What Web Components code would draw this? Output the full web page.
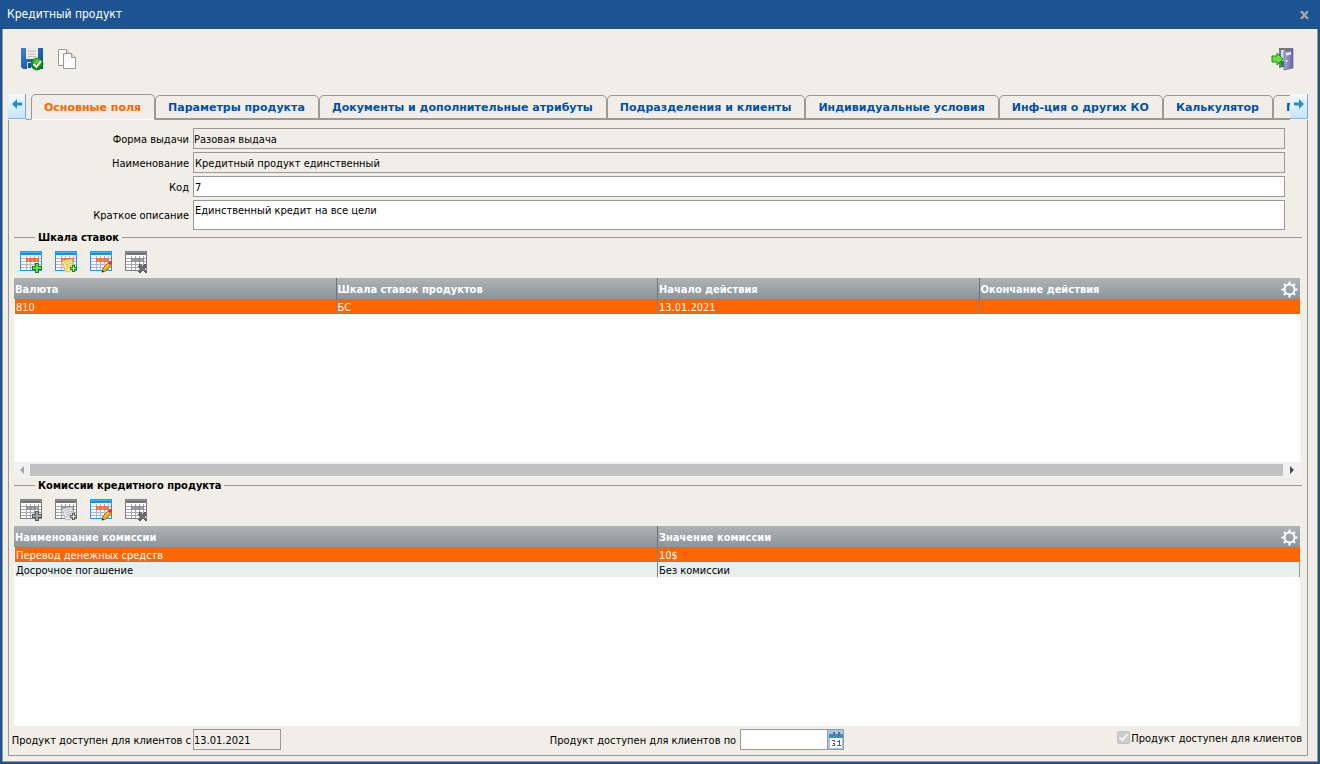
<!DOCTYPE html>
<html lang="ru">
<head>
<meta charset="utf-8">
<title>Кредитный продукт</title>
<style>
html, body { height: 100%; }
body {
  margin: 0;
  background: #1e5391;
  color: #000;
  font: 11px/15px "DejaVu Sans Condensed", "DejaVu Sans", "Liberation Sans", sans-serif;
  --line: #999;
  --paper: #f1eee7;
  --accent: #ff6600;
}
</style>
</head>
<body>
<product-window></product-window>
<script>
const define = (name, html, setup) => {
  const tpl = document.createElement('template');
  tpl.innerHTML = html;
  customElements.define(name, class extends HTMLElement {
    connectedCallback() {
      if (this.shadowRoot) return;
      const root = this.attachShadow({ mode: 'open' });
      root.append(tpl.content.cloneNode(true));
      if (setup) setup(this, root);
    }
  });
};

/* Grid toolbar buttons: a small table sheet with an action mark */
const marks = {
  add: '<path d="M15 12h4v3h3v4h-3v3h-4v-3h-3v-4h3z" fill="var(--m1)"/><path d="M16 13h2v3h3v2h-3v3h-2v-3h-3v-2h3z" fill="var(--m2)"/>',
  copy: '<path d="M7 10l10-2 2 11-8 2c-2-3-2-7-4-11z" fill="var(--n1)" stroke="var(--n2)" shape-rendering="auto"/><path d="M9 12l7-2M10 14l7-2M11 16l6-2M11 18l5-2" stroke="var(--n2)" fill="none" shape-rendering="auto"/><path d="M17 14h3v2h2v3h-2v2h-3v-2h-2v-3h2z" fill="var(--m1)"/><path d="M18 15h1v2h2v1h-2v2h-1v-2h-2v-1h2z" fill="var(--m3)"/>',
  edit: '<g shape-rendering="auto"><path d="M12 21l1-4 6-6 3 3-6 6z" fill="#ffa01e" stroke="#b56000" stroke-width=".8"/><path d="M14 18l5-5" stroke="#ffd45c"/><path d="M18 12l2-2c1-.5 3 1 2 2l-2 2z" fill="#e82f1c"/><path d="M11.600 21.500l1-2.500 1.500 1.700z" fill="#222"/></g>',
  remove: '<path d="M14 13h2v1h1v1h1v-1h1v-1h2v2h1v1h-1v1h-1v2h1v1h1v2h-2v-1h-1v-1h-2v1h-1v1h-2v-1h-1v-1h1v-1h1v-2h-1v-1h-1v-1h1z" fill="#5c5e60"/><path d="M15 15l5 5M20 15l-5 5" stroke="#808488" shape-rendering="auto"/>'
};
define('grid-tool', `
<style>
:host { display: block; width: 22px; height: 22px;
  --f:#1c97ff; --h:#52b4ff; --t:#2a7ccc; --c:#ff6a3c; --d:#ffa283; --g:#b9b5cf; --m1:#118a11; --m2:#6ede3f; --m3:#b8f79a; --n1:#fff3a0; --n2:#d9bb4a; }
:host([disabled]) { --f:#7e8082; --h:#96989a; --t:#5c5e60; --c:#8e9092; --d:#acaeb0; --g:#a6a8aa; --m1:#57595b; --m2:#a2a4a6; --m3:#eee; --n1:#eee; --n2:#b4b4b4; }
button { display: block; width: 22px; height: 22px; padding: 0; border: 0; background: none; }
svg { display: block; overflow: visible; }
</style>
<button type="button"><svg width="22" height="22" viewBox="0 0 22 22" shape-rendering="crispEdges">
<rect width="22" height="20" y="0" rx="1" fill="var(--f)"/>
<rect x="1" y="1" width="20" height="1" fill="var(--h)"/><rect x="2" y="2" width="18" height="1" fill="var(--t)"/>
<rect x="1" y="4" width="20" height="15" fill="#f8f8fd"/>
<path d="M1 7.500h20M1 10.500h20M1 13.500h20M1 16.500h20" stroke="var(--g)"/>
<path d="M6.500 5v14M10.500 5v14M14.500 5v14M18.500 5v14" stroke="var(--g)"/>
<rect x="6" y="7" width="13" height="4" fill="var(--c)"/>
<path d="M8.500 8v3M12.500 8v3M16.500 8v3" stroke="var(--d)"/>
<g id="mark"></g></svg></button>`, (el, root) => {
  root.getElementById('mark').innerHTML = marks[el.getAttribute('kind')];
  const b = root.querySelector('button');
  b.disabled = el.hasAttribute('disabled');
  b.setAttribute('aria-label', el.getAttribute('label'));
});

define('tool-row', `
<style>:host { display: flex; gap: 13px; padding: 6px 6px 5px; }</style><slot></slot>`);

define('section-title', `
<style>
:host { display: flex; align-items: center; gap: 3px; height: 15px; font-weight: bold; }
i { height: 1px; background: var(--line); width: 21px; }
i:last-child { flex: 1; }
h2 { font: inherit; margin: 0; }
</style><i></i><h2><slot></slot></h2><i></i>`);

define('form-field', `
<style>
:host { display: grid; grid-template-columns: 175px 1fr; column-gap: 4px; align-items: center; }
label { text-align: right; white-space: nowrap; padding-top: 1px; }
input, textarea { box-sizing: border-box; display: block; width: 100%; height: 21px; margin: 0; padding: 1px 1px 0; border: 1px solid var(--line); border-radius: 0; background: #fff; font: inherit; color: #000; resize: none; outline: 0; }
textarea { height: 30px; padding-top: 2px; overflow: hidden; }
[readonly] { background: #f1eee7; }
:host([flush]) input { padding: 1px 0 0; }
</style><label for="f"></label>`, (el, root) => {
  root.querySelector('label').textContent = el.getAttribute('label');
  const f = document.createElement(el.hasAttribute('multiline') ? 'textarea' : 'input');
  f.id = 'f';
  f.value = el.getAttribute('value') || '';
  f.readOnly = el.hasAttribute('readonly');
  root.append(f);
});

define('data-grid', `
<style>
:host { display: block; background: #fff; min-height: 100px; margin-right: 2px; }
.wrap { display: grid; }
.wrap > * { grid-area: 1 / 1; }
table { width: 100%; border-collapse: separate; border-spacing: 0; table-layout: fixed; }
th, td { text-align: left; white-space: nowrap; overflow: hidden; border-left: 1px solid #7f8488; }
th:first-child, td:first-child { border-left-color: transparent; }
thead tr { background: linear-gradient(#adb3b6, #8e9599); }
th { height: 21px; padding: 1px 1px 0; color: #fff; font-weight: bold; box-sizing: border-box; border-left-color: #6e7478; }
th:first-child { padding-left: 0; }
td { height: 15px; padding: 2px 1px 0; box-sizing: border-box; line-height: 13px; background: #e8f0ed; background-clip: padding-box; }
td:last-child { border-right: 1px solid #999; }
.sel td { background-color: var(--accent); color: #fff; }
.sel td:last-child { border-right-color: var(--accent); }
button { justify-self: end; width: 20px; height: 21px; padding: 0; border: 0; background: none; z-index: 1; }
svg { display: block; margin: 1px 0 0 1px; }
</style>
<div class="wrap"><table><thead><tr></tr></thead><tbody></tbody></table>
<button type="button" aria-label="Настройка столбцов"><svg width="17" height="17" viewBox="-8.500 -8.500 17 17" fill="none" stroke="#fff"><circle r="5" stroke-width="2"/><path d="M0-8v3M0 8V5M-8 0h3M8 0H5M-5.500-5.500l2 2M5.500-5.500l-2 2M-5.500 5.500l2-2M5.500 5.500l-2-2" stroke-width="2"/></svg></button></div>`, (el, root) => {
  const cells = (row, tag, text) => text.split('|').forEach(t => {
    const c = document.createElement(tag);
    if (tag === 'th') c.scope = 'col';
    c.textContent = t;
    row.append(c);
  });
  cells(root.querySelector('thead tr'), 'th', el.getAttribute('columns'));
  el.getAttribute('rows').split(';').forEach((text, i) => {
    const tr = document.createElement('tr');
    if (!i) tr.className = 'sel';
    cells(tr, 'td', text);
    root.querySelector('tbody').append(tr);
  });
});

define('scroll-track', `
<style>
:host { display: flex; align-items: center; height: 16px; background: #f1f1f1; margin-right: 2px; }
button { width: 16px; height: 16px; padding: 0; border: 0; background: none; flex: none; }
i { flex: 1; height: 12px; background: #c1c1c1; margin-right: 1px; }
svg { display: block; margin: auto; }
</style>
<button type="button" aria-label="Влево" disabled><svg width="8" height="8"><path d="M6 0v8L2 4z" fill="#a3a3a3"/></svg></button><i></i><button type="button" aria-label="Вправо"><svg width="8" height="8"><path d="M2 0v8l4-4z" fill="#484848"/></svg></button>`);

define('tab-button', `
<style>
:host { display: block; flex: none; }
button { display: block; box-sizing: border-box; height: 25px; margin: 1px 0 0; padding: 1px 13px 0 12px; border: 1px solid var(--line); border-bottom-width: 2px; border-radius: 5px 5px 0 0; background: var(--paper); color: #0150ad; font: bold 11px/15px "DejaVu Sans", sans-serif; white-space: nowrap; width: 100%; }
:host([active]) button { height: 26px; margin: 0; padding-bottom: 1px; color: var(--accent); border-width: 1px; border-bottom-color: #fff; }
</style><button type="button" role="tab"><slot></slot></button>`);

define('tab-strip', `
<style>
:host { display: flex; height: 26px; }
.list { flex: 1; min-width: 0; overflow: hidden; display: flex; padding-left: 5px; background: linear-gradient(var(--line), var(--line)) 0 25px / 100% 1px no-repeat; }
button { flex: none; width: 18px; height: 25px; padding: 0; border: 0; border-right: 1px solid #6fa3e0; border-bottom: 1px solid #8fb4e2; background: linear-gradient(#f2faff, #c5e5fc); }
svg { display: block; margin: 0 auto 4px; }
</style>
<button type="button" aria-label="Предыдущие вкладки"><svg width="10" height="10"><path d="M0 5l5-5v3.500h5v3H5V10z" fill="#238fc9"/></svg></button>
<div class="list" role="tablist"><slot></slot></div>
<button type="button" aria-label="Следующие вкладки"><svg width="10" height="10"><path d="M10 5L5 0v3.500H0v3h5V10z" fill="#238fc9"/></svg></button>`);

define('main-toolbar', `
<style>
:host { display: flex; gap: 13px; padding: 18px 14px 22px 13px; align-items: center; height: 25px; }
button { width: 23px; height: 24px; padding: 0; border: 0; background: none; }
button:last-child { margin-left: auto; }
svg { display: block; overflow: visible; }
</style>
<button type="button" aria-label="Сохранить"><svg width="23" height="24" viewBox="0 0 23 24">
<defs><linearGradient id="b" x2="1" y2="1"><stop stop-color="#3b83dc"/><stop offset="1" stop-color="#0b429a"/></linearGradient><radialGradient id="g" cy=".3"><stop stop-color="#63d83c"/><stop offset="1" stop-color="#068713"/></radialGradient></defs>
<path d="M0 0h22v21H2l-2-2z" fill="url(#b)"/><path d="M5 0h12v11H5z" fill="#ecebe7"/><path d="M7 3h8M7 6h8M7 8.500h8" stroke="#bdbab6"/><path d="M6 14h9v7H6z" fill="#dce5f1"/><path d="M7 15h3v5H7z" fill="#184b98"/>
<circle cx="16" cy="16" r="6" fill="url(#g)" stroke="#057b0b" stroke-width=".7"/><path d="M12.500 16l3 3 4.500-6" stroke="#fff" stroke-width="2" fill="none"/></svg></button>
<button type="button" aria-label="Копировать"><svg width="20" height="22" viewBox="0 0 20 22" fill="#fff" stroke="#999"><path d="M1.500.500h8l4 4v12h-12z"/><path d="M9.500.500v4h4" fill="#ddd"/><path d="M6.500 4.500h8l4 4v11h-12z"/><path d="M14.500 4.500v4h4" fill="#ddd"/></svg></button>
<button type="button" aria-label="Выход"><svg width="23" height="24" viewBox="0 1 23 24"><defs><linearGradient id="d"><stop stop-color="#a9a6d8"/><stop offset="1" stop-color="#6864a6"/></linearGradient></defs>
<path d="M8 1h14v20H8z" fill="#77777c"/><path d="M10 3h4v18h-4z" fill="#c7e6fa"/><path d="M10 14h4v6h-4z" fill="#16952b"/><path d="M13 4l9-2v19l-9 2z" fill="url(#d)" stroke="#62609a" stroke-width=".7"/><path d="M15 6l5-1v2.500l-5 1z" fill="#f1f1fb"/><circle cx="15.500" cy="14" r="1.200" fill="#ddd"/><path d="M1 9h5V6l6 6-6 6v-3H1z" fill="#69dd3c" stroke="#198c17"/></svg></button>`);

define('date-footer', `
<style>
:host { display: grid; grid-template-columns: 1fr 1fr 1fr; align-items: center; padding: 3px 0 5px; }
div { display: flex; align-items: center; }
label { padding-top: 1px; }
.mid { justify-content: center; padding-left: 78px; }
.end { justify-content: flex-end; gap: 1px; align-items: flex-start; height: 18px; }
.end label { padding: 0; }
.a { width: 177px; display: flex; justify-content: flex-end; margin-right: 2px; white-space: nowrap; }
.b { margin-right: 4px; white-space: nowrap; }
input[type=text] { box-sizing: border-box; width: 88px; height: 21px; border: 1px solid var(--line); padding: 1px 0 0; font: inherit; background: #fff; border-radius: 0; color: #000; outline: 0; }
input[readonly] { background: #f1eee7 !important; }
button { box-sizing: border-box; width: 16px; height: 21px; padding: 0; margin: 0; border: 1px solid var(--line); border-left: 0; background: #a3c5ee; }
svg { display: block; }
input[type=checkbox] { appearance: none; flex: none; width: 13px; height: 13px; margin: 0; border-radius: 2px; background: #ccc; border: 1px solid #c2c2c2; display: grid; }
input[type=checkbox]::after { content: ""; width: 3px; height: 7px; border: solid #f4f4f4; border-width: 0 2px 2px 0; transform: rotate(40deg); margin: 0 0 0 3px; }
</style>
<div><label class="a" for="from">Продукт доступен для клиентов с</label><input type="text" id="from" value="13.01.2021" readonly></div>
<div class="mid"><label class="b" for="to">Продукт доступен для клиентов по</label><input type="text" id="to"><button type="button" aria-label="Календарь"><svg width="15" height="19" viewBox="0 0 15 19" shape-rendering="crispEdges"><path d="M2 4h12v14H2z" fill="#fff"/><path d="M1 4h14v4H1z" fill="#3a91c4"/><path d="M5 2h2v4H5zM10 2h2v4h-2z" fill="#686b80"/><path d="M4 10h3v2H6v1h1v3H4v-1h2v-1H5v-1h1v-2H4zM9 11h2v-1h1v6h-1v-4H9z" fill="#426078"/><path d="M4 15h3v1H4zM9 15h4v1H9z" fill="#536879"/></svg></button></div>
<div class="end"><input type="checkbox" id="on" checked disabled><label for="on">Продукт доступен для клиентов</label></div>`);

define('product-window', `
<style>
:host { display: flex; flex-direction: column; box-sizing: border-box; min-height: 100vh; border: solid #1e5391; border-width: 0 2px 2px; }
header { display: flex; align-items: center; justify-content: space-between; height: 29px; padding: 0 9px 0 5px; color: #fff; font-size: 12px; }
h1 { font: inherit; margin: 0; }
header button { padding: 0; border: 0; background: none; width: 9px; height: 8px; }
header svg { display: block; }
main { flex: 1; display: flex; flex-direction: column; background: var(--paper); border: solid var(--line); border-width: 0 1px 1px; padding: 0 9px 5px 5px; }
.panel { flex: 1; display: flex; flex-direction: column; border: solid var(--line); border-width: 0 1px 1px; padding: 8px 5px 0; }
.fields { display: grid; gap: 3px; margin-right: 17px; }
.g1 { flex: 23 0 0; }
.g2 { flex: 25 0 0; }
</style>
<header><h1>Кредитный продукт</h1><button type="button" aria-label="Закрыть"><svg width="9" height="8"><path d="M1 0l7 8M8 0l-7 8" stroke="#a6a6a6" stroke-width="2.400"/></svg></button></header>
<main>
<main-toolbar></main-toolbar>
<tab-strip>
<tab-button active>Основные поля</tab-button><tab-button>Параметры продукта</tab-button><tab-button>Документы и дополнительные атрибуты</tab-button><tab-button>Подразделения и клиенты</tab-button><tab-button>Индивидуальные условия</tab-button><tab-button>Инф-ция о других КО</tab-button><tab-button>Калькулятор</tab-button><tab-button>П</tab-button>
</tab-strip>
<div class="panel">
<div class="fields">
<form-field label="Форма выдачи" value="Разовая выдача" readonly flush></form-field>
<form-field label="Наименование" value="Кредитный продукт единственный" readonly></form-field>
<form-field label="Код" value="7"></form-field>
<form-field label="Краткое описание" value="Единственный кредит на все цели" multiline></form-field>
</div>
<section-title>Шкала ставок</section-title>
<tool-row><grid-tool kind="add" label="Добавить"></grid-tool><grid-tool kind="copy" label="Копировать"></grid-tool><grid-tool kind="edit" label="Изменить"></grid-tool><grid-tool kind="remove" label="Удалить" disabled></grid-tool></tool-row>
<data-grid class="g1" columns="Валюта|Шкала ставок продуктов|Начало действия|Окончание действия" rows="810|БС|13.01.2021|"></data-grid>
<scroll-track></scroll-track>
<section-title>Комиссии кредитного продукта</section-title>
<tool-row><grid-tool kind="add" label="Добавить" disabled></grid-tool><grid-tool kind="copy" label="Копировать" disabled></grid-tool><grid-tool kind="edit" label="Изменить"></grid-tool><grid-tool kind="remove" label="Удалить" disabled></grid-tool></tool-row>
<data-grid class="g2" columns="Наименование комиссии|Значение комиссии" rows="Перевод денежных средств|10$;Досрочное погашение|Без комиссии"></data-grid>
<date-footer></date-footer>
</div>
</main>`);
</script>
</body>
</html>
